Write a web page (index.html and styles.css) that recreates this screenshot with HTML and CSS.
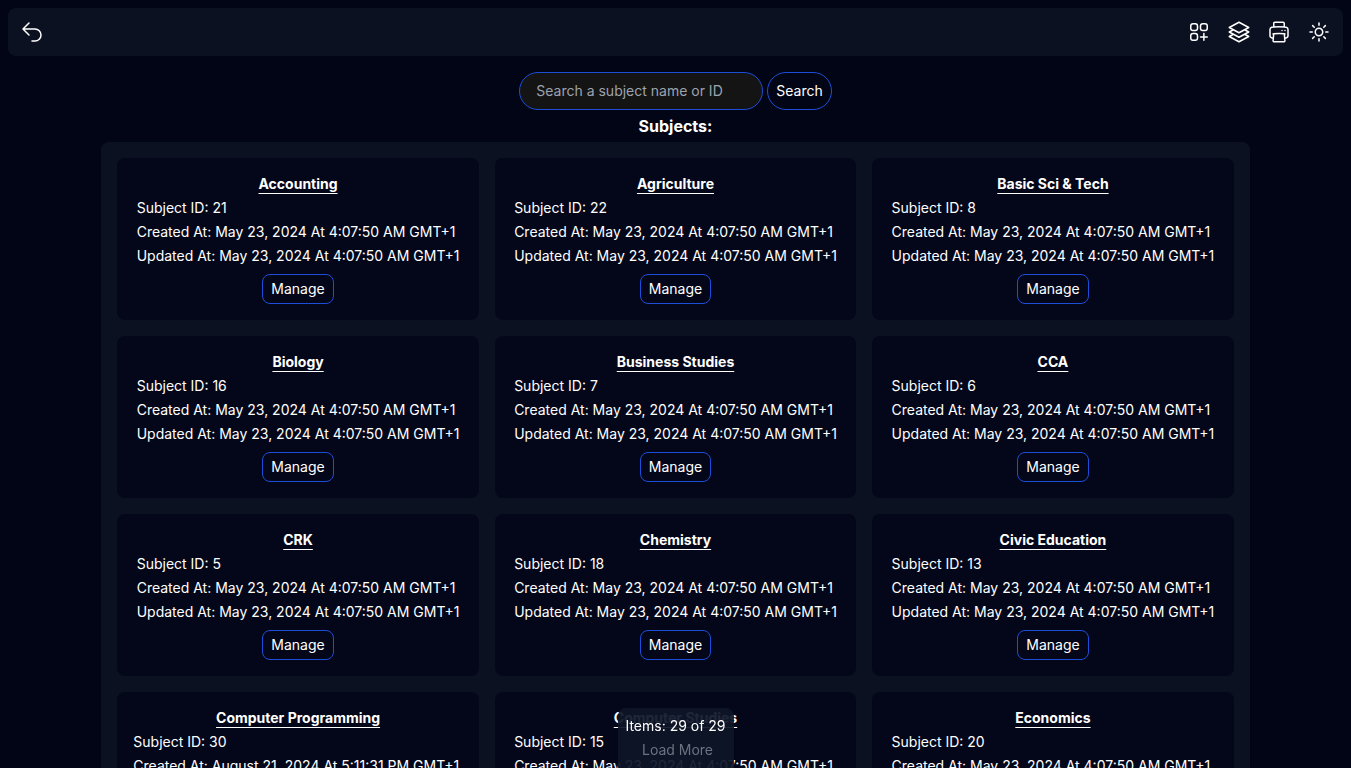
FILE: index.html
```html
<!DOCTYPE html>
<html lang="en">

<head>
    <meta charset="UTF-8">
    <meta name="viewport" content="width=device-width, initial-scale=1.0">
    <title>Subjects</title>
    <link rel="stylesheet" href="styles.css">
</head>

<body>
    <header class="navbar">
        <a href="#" class="icon-link" aria-label="Go back">
            <svg class="icon" viewBox="0 0 24 24">
                <path d="M9 15 3 9m0 0 6-6M3 9h12a6 6 0 0 1 0 12h-3" />
            </svg>
        </a>
        <nav class="nav-actions">
            <a href="#" class="icon-link" aria-label="Add subject">
                <svg class="icon" viewBox="0 0 24 24">
                    <path d="M13.5 16.875h3.375m0 0h3.375m-3.375 0V13.5m0 3.375v3.375M6 10.5h2.25a2.25 2.25 0 0 0 2.25-2.25V6a2.25 2.25 0 0 0-2.25-2.25H6A2.25 2.25 0 0 0 3.75 6v2.25A2.25 2.25 0 0 0 6 10.5Zm0 9.75h2.25A2.25 2.25 0 0 0 10.5 18v-2.25a2.25 2.25 0 0 0-2.25-2.25H6a2.25 2.25 0 0 0-2.25 2.25V18A2.25 2.25 0 0 0 6 20.25Zm9.75-9.75H18a2.25 2.25 0 0 0 2.25-2.25V6A2.25 2.25 0 0 0 18 3.75h-2.25A2.25 2.25 0 0 0 13.5 6v2.25a2.25 2.25 0 0 0 2.25 2.25Z" />
                </svg>
            </a>
            <a href="#" class="icon-link" aria-label="Classes">
                <svg class="icon" viewBox="0 0 24 24">
                    <path d="M6.429 9.75 2.25 12l4.179 2.25m0-4.5 5.571 3 5.571-3m-11.142 0L2.25 7.5 12 2.25l9.75 5.25-4.179 2.25m0 0L21.75 12l-4.179 2.25m0 0 4.179 2.25L12 21.75 2.25 16.5l4.179-2.25m11.142 0-5.571 3-5.571-3" />
                </svg>
            </a>
            <button type="button" class="icon-link" aria-label="Print">
                <svg class="icon" viewBox="0 0 24 24">
                    <path d="M6.72 13.829c-.24.03-.48.062-.72.096m.72-.096a42.415 42.415 0 0 1 10.56 0m-10.56 0L6.34 18m10.94-4.171c.24.03.48.062.72.096m-.72-.096L17.66 18m0 0 .229 2.523a1.125 1.125 0 0 1-1.12 1.227H7.231c-.662 0-1.18-.568-1.12-1.227L6.34 18m11.318 0h1.091A2.25 2.25 0 0 0 21 15.75V9.456c0-1.081-.768-2.015-1.837-2.175a48.055 48.055 0 0 0-1.913-.247M6.34 18H5.25A2.25 2.25 0 0 1 3 15.75V9.456c0-1.081.768-2.015 1.837-2.175a48.041 48.041 0 0 1 1.913-.247m10.5 0a48.536 48.536 0 0 0-10.5 0m10.5 0V3.375c0-.621-.504-1.125-1.125-1.125h-8.25c-.621 0-1.125.504-1.125 1.125v3.659M18 10.5h.008v.008H18V10.5Zm-3 0h.008v.008H15V10.5Z" />
                </svg>
            </button>
            <button type="button" class="icon-link" aria-label="Toggle theme">
                <svg class="icon" viewBox="0 0 24 24">
                    <path d="M12 3v2.25m6.364.386-1.591 1.591M21 12h-2.25m-.386 6.364-1.591-1.591M12 18.75V21m-4.773-4.227-1.591 1.591M5.25 12H3m4.227-4.773L5.636 5.636M15.75 12a3.75 3.75 0 1 1-7.5 0 3.75 3.75 0 0 1 7.5 0Z" />
                </svg>
            </button>
        </nav>
    </header>

    <main>
        <form class="search-form">
            <input type="text" class="search-input" placeholder="Search a subject name or ID" aria-label="Search a subject name or ID">
            <button type="submit" class="search-btn">Search</button>
        </form>

        <h1 class="heading">Subjects:</h1>

        <div class="subjects" id="subjects"></div>
    </main>

    <div class="pager">
        <p>Items: 29 of 29</p>
        <button type="button" class="load-more" disabled>Load More</button>
    </div>

    <script src="script.js"></script>
</body>

</html>
```
FILE: styles.css
```css
* {
    margin: 0;
    padding: 0;
    box-sizing: border-box;
}

body {
    background-color: #020515;
    color: #fff;
    font-family: Inter, sans-serif;
    font-size: 14px;
    line-height: 24px;
}

button,
input {
    font: inherit;
    color: inherit;
    background: none;
    border: none;
}

/* Top bar */
.navbar {
    display: flex;
    justify-content: space-between;
    align-items: center;
    margin: 8px;
    padding: 12px;
    border-radius: 8px;
    background-color: #0c1122;
}

.nav-actions {
    display: flex;
    gap: 16px;
}

.icon-link {
    display: block;
    color: #fff;
    cursor: pointer;
}

.icon {
    display: block;
    width: 24px;
    height: 24px;
    fill: none;
    stroke: currentColor;
    stroke-width: 1.5;
    stroke-linecap: round;
    stroke-linejoin: round;
}

/* Search */
.search-form {
    display: flex;
    justify-content: center;
    gap: 4px;
    margin-top: 16px;
}

.search-input,
.search-btn {
    height: 38px;
    border: 1px solid #1d4ed8;
    border-radius: 20px;
}

.search-input {
    width: 244px;
    padding: 0 16px 2px;
    background-color: #141414;
    outline: none;
}

.search-input::placeholder {
    color: #9ca3af;
}

.search-btn {
    padding: 0 8px;
}

.heading {
    margin: 4px 0;
    font-size: 16px;
    line-height: 24px;
    text-align: center;
}

/* Subject cards */
.subjects {
    display: grid;
    grid-template-columns: repeat(3, 1fr);
    gap: 16px;
    width: 85%;
    margin: 0 auto;
    padding: 16px;
    border-radius: 8px;
    background-color: #0c1122;
}

.card {
    display: flex;
    flex-direction: column;
    align-items: center;
    padding: 14px 16px 16px;
    border-radius: 8px;
    background-color: #040719;
}

.card-title {
    font-size: 14px;
    line-height: 24px;
    text-decoration: underline;
    text-underline-offset: 4px;
}

.manage-btn {
    height: 30px;
    margin-top: 6px;
    padding: 0 8px;
    border: 1px solid #1d4ed8;
    border-radius: 8px;
    cursor: pointer;
}

/* Item counter over the list */
.pager {
    position: fixed;
    bottom: 0;
    left: 50%;
    transform: translateX(-50%);
    padding: 6px 8px;
    border-radius: 8px 8px 0 0;
    background-color: rgba(14, 22, 40, 0.93);
    text-align: center;
}

.load-more {
    padding-left: 4px;
    color: #6b7280;
}

@media (max-width: 1024px) {
    .subjects {
        grid-template-columns: 1fr;
    }
}
```
FILE: script.js
```js
const seeded = 'May 23, 2024 At 4:07:50 AM GMT+1';

const subjects = [
    { id: 21, name: 'Accounting', date: seeded },
    { id: 22, name: 'Agriculture', date: seeded },
    { id: 8, name: 'Basic Sci & Tech', date: seeded },
    { id: 16, name: 'Biology', date: seeded },
    { id: 7, name: 'Business Studies', date: seeded },
    { id: 6, name: 'CCA', date: seeded },
    { id: 5, name: 'CRK', date: seeded },
    { id: 18, name: 'Chemistry', date: seeded },
    { id: 13, name: 'Civic Education', date: seeded },
    { id: 30, name: 'Computer Programming', date: 'August 21, 2024 At 5:11:31 PM GMT+1' },
    { id: 15, name: 'Computer Studies', date: seeded },
    { id: 20, name: 'Economics', date: seeded }
];

const list = document.getElementById('subjects');

subjects.forEach((subject) => {
    const card = document.createElement('section');
    card.className = 'card';
    card.innerHTML = `
        <h2 class="card-title"></h2>
        <div class="card-info">
            <p>Subject ID: ${subject.id}</p>
            <p>Created At: ${subject.date}</p>
            <p>Updated At: ${subject.date}</p>
        </div>
        <button type="button" class="manage-btn">Manage</button>
    `;
    card.querySelector('.card-title').textContent = subject.name;
    list.appendChild(card);
});
```
